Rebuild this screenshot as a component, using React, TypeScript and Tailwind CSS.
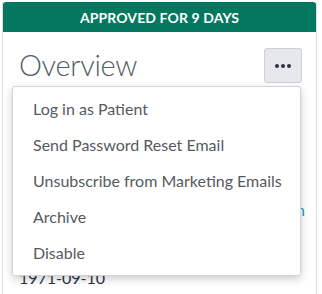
export default function App() {
  const items = [
    "Log in as Patient",
    "Send Password Reset Email",
    "Unsubscribe from Marketing Emails",
    "Archive",
    "Disable",
  ];
  return (
    <div className="w-[322px] h-[294px] overflow-hidden bg-white" style={{ fontFamily: "Lato, 'Open Sans', sans-serif" }}>
      <div className="relative ml-[2px] mt-[2px] w-[315px] h-[300px] border-x border-[#dcdcdc]">
        <div className="h-[30px] bg-[#03785f] rounded-t-[3px] flex items-center justify-center text-white font-bold text-[14px] tracking-[0.1px]">
          APPROVED FOR 9 DAYS
        </div>
        <div className="pl-[16px] pr-[14px]">
          <div className="flex items-start justify-between pt-[16px]">
            <div className="text-[29px] font-light text-[#555b66] leading-[40px] mt-[-3px] tracking-[-0.3px]">Overview</div>
            <button className="w-[38px] h-[35px] rounded-[3px] border border-[#cfcfd6] bg-[#e7e7ee] flex items-center justify-center gap-[2px]">
              <span className="w-[4px] h-[4px] rounded-full bg-[#2b3340]" />
              <span className="w-[4px] h-[4px] rounded-full bg-[#2b3340]" />
              <span className="w-[4px] h-[4px] rounded-full bg-[#2b3340]" />
            </button>
          </div>
          <div className="h-[113px]" />
          <div className="flex justify-end mr-[-3px] text-[16px] leading-[24px] text-[#1a9bc7]">Edit in Admin</div>
          <div className="h-[44px]" />
          <div className="text-[16px] leading-[24px] text-[#2a3547]">1971-09-10</div>
        </div>
        <div className="absolute left-[9px] top-[84px] w-[289px] bg-white border border-[#d4d4d4] rounded-[3px] shadow-[0_3px_8px_rgba(0,0,0,0.2)] py-[4px]">
          {items.map((t) => (
            <div key={t} className="h-[36px] flex items-center pl-[20px] text-[16px] text-[#555a60]">
              {t}
            </div>
          ))}
        </div>
      </div>
    </div>
  );
}
